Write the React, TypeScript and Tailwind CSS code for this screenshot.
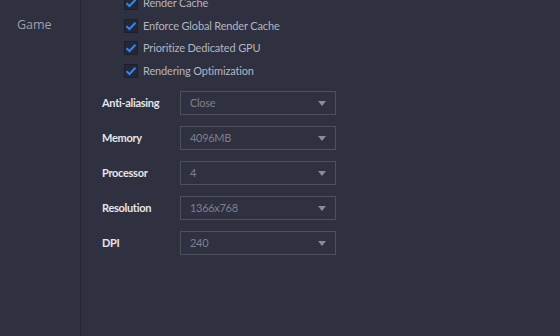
import React from 'react';

const checks = ['Render Cache', 'Enforce Global Render Cache', 'Prioritize Dedicated GPU', 'Rendering Optimization'];

const selects = [
  { label: 'Anti-aliasing', value: 'Close' },
  { label: 'Memory', value: '4096MB' },
  { label: 'Processor', value: '4' },
  { label: 'Resolution', value: '1366x768' },
  { label: 'DPI', value: '240' },
];

const Check = () => (
  <span className="flex h-[14px] w-[14px] items-center justify-center border border-[#1e1f2a] bg-[#262735]">
    <svg width="12" height="10" viewBox="0 0 12 10">
      <path d="M1.5 5.2 L4.5 8 L10.5 1.8" fill="none" stroke="#2e86f6" strokeWidth="2" />
    </svg>
  </span>
);

export default function App() {
  return (
    <div className="flex h-[336px] w-[560px] overflow-hidden bg-[#2f3141] font-['Lato',sans-serif]">
      {/* Sidebar */}
      <div className="w-[81px] shrink-0 border-r border-[#252634] pt-[15px] pl-[17px]">
        <div className="font-['Open_Sans',sans-serif] text-[12.5px] leading-[20px] text-[#9c9ea9]">Game</div>
      </div>
      {/* Content */}
      <div className="flex-1 pl-[21px]">
        <div className="-mt-[4px] ml-[22px] flex flex-col gap-[8px]">
          {checks.map(c => (
            <div key={c} className="flex h-[14.5px] items-center gap-[5px]">
              <Check />
              <span className="text-[11px] tracking-[-0.15px] text-[#b3b5bf]">{c}</span>
            </div>
          ))}
        </div>
        <div className="mt-[13px] flex flex-col gap-[11px]">
          {selects.map(s => (
            <div key={s.label} className="flex items-center">
              <span className="w-[78px] text-[11px] font-bold tracking-[-0.3px] text-[#e4e5ea]">{s.label}</span>
              <div className="flex h-[24px] w-[156px] items-center justify-between border border-[#4e505e] pl-[9px] pr-[9px]">
                <span className="text-[11px] tracking-[-0.3px] text-[#7d7f8b]">{s.value}</span>
                <svg width="8" height="5" viewBox="0 0 8 5">
                  <path d="M0 0 H8 L4 5 Z" fill="#8a8c98" />
                </svg>
              </div>
            </div>
          ))}
        </div>
      </div>
    </div>
  );
}
